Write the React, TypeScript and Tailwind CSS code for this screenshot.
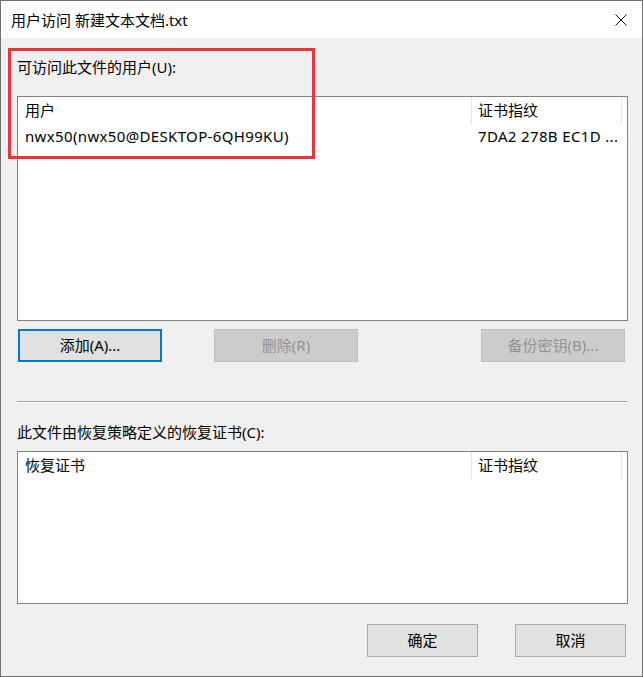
import React from 'react';

const font = "font-['Noto_Sans','Noto_Sans_CJK_SC',sans-serif]";

function ListView({ first, second, rows, height }: { first: string; second: string; rows: string[][]; height: string }) {
  return (
    <div className={`bg-white border border-[#828282] ${height}`}>
      <div className="flex h-[27px] items-center">
        <div className="w-[454px] h-full flex items-center pl-[7px] border-r border-[#e5e5e5]">{first}</div>
        <div className="w-[150px] h-full flex items-center pl-[6px] border-r border-[#e5e5e5]">{second}</div>
      </div>
      {rows.map((r, i) => (
        <div key={i} className="flex h-[24px] items-center tracking-[0.35px]">
          <div className="w-[454px] pl-[7px] whitespace-nowrap">{r[0]}</div>
          <div className="w-[150px] pl-[6px] whitespace-nowrap">{r[1]}</div>
        </div>
      ))}
    </div>
  );
}

function Btn({ label, kind }: { label: string; kind?: 'focus' | 'disabled' }) {
  const cls =
    kind === 'focus'
      ? 'bg-[#e1e1e1] border-2 border-[#0078d7] text-black'
      : kind === 'disabled'
      ? 'bg-[#cccccc] border border-[#bfbfbf] text-[#939393]'
      : 'bg-[#e1e1e1] border border-[#adadad] text-black';
  return <div className={`w-[144px] h-[33px] flex items-center justify-center ${cls}`}>{label}</div>;
}

export default function App() {
  return (
    <div className={`relative w-[643px] h-[677px] border border-[#707070] bg-[#f0f0f0] text-[15px] text-black ${font}`}>
      <div className="h-[37px] bg-white flex items-center justify-between pl-[10px] pr-[15px]">
        <span className="leading-[20px]">用户访问 新建文本文档.txt</span>
        <svg width="12" height="12" viewBox="0 0 12 12" className="mt-[1px]">
          <path d="M0.5 0.5 L11.5 11.5 M11.5 0.5 L0.5 11.5" stroke="#111" strokeWidth="1" />
        </svg>
      </div>
      <div className="pl-[16px] pr-[14px]">
        <div className="mt-[19px] h-[20px] leading-[20px]">可访问此文件的用户(U):</div>
        <div className="mt-[19px]">
          <ListView
            first="用户"
            second="证书指纹"
            rows={[['nwx50(nwx50@DESKTOP-6QH99KU)', '7DA2 278B EC1D ...']]}
            height="h-[225px]"
          />
        </div>
        <div className="mt-[8px] flex justify-between">
          <div className="flex gap-[52px]">
            <div className="ml-[1px]">
              <Btn label="添加(A)..." kind="focus" />
            </div>
            <Btn label="删除(R)" kind="disabled" />
          </div>
          <div className="mr-[3px]">
            <Btn label="备份密钥(B)..." kind="disabled" />
          </div>
        </div>
        <div className="mt-[39px] h-[2px] border-t border-[#a0a0a0] border-b border-b-white mr-[1px]" />
        <div className="mt-[19px] h-[20px] leading-[20px]">此文件由恢复策略定义的恢复证书(C):</div>
        <div className="mt-[9px]">
          <ListView first="恢复证书" second="证书指纹" rows={[]} height="h-[153px]" />
        </div>
        <div className="mt-[20px] flex justify-end gap-[37px] pr-[2px]">
          <div className="w-[111px] h-[33px] flex items-center justify-center bg-[#e1e1e1] border border-[#adadad]">确定</div>
          <div className="w-[111px] h-[33px] flex items-center justify-center bg-[#e1e1e1] border border-[#adadad]">取消</div>
        </div>
      </div>
      <div className="absolute left-[7px] top-[47px] w-[307px] h-[111px] border-[3px] border-[#e8353b] pointer-events-none" />
    </div>
  );
}
